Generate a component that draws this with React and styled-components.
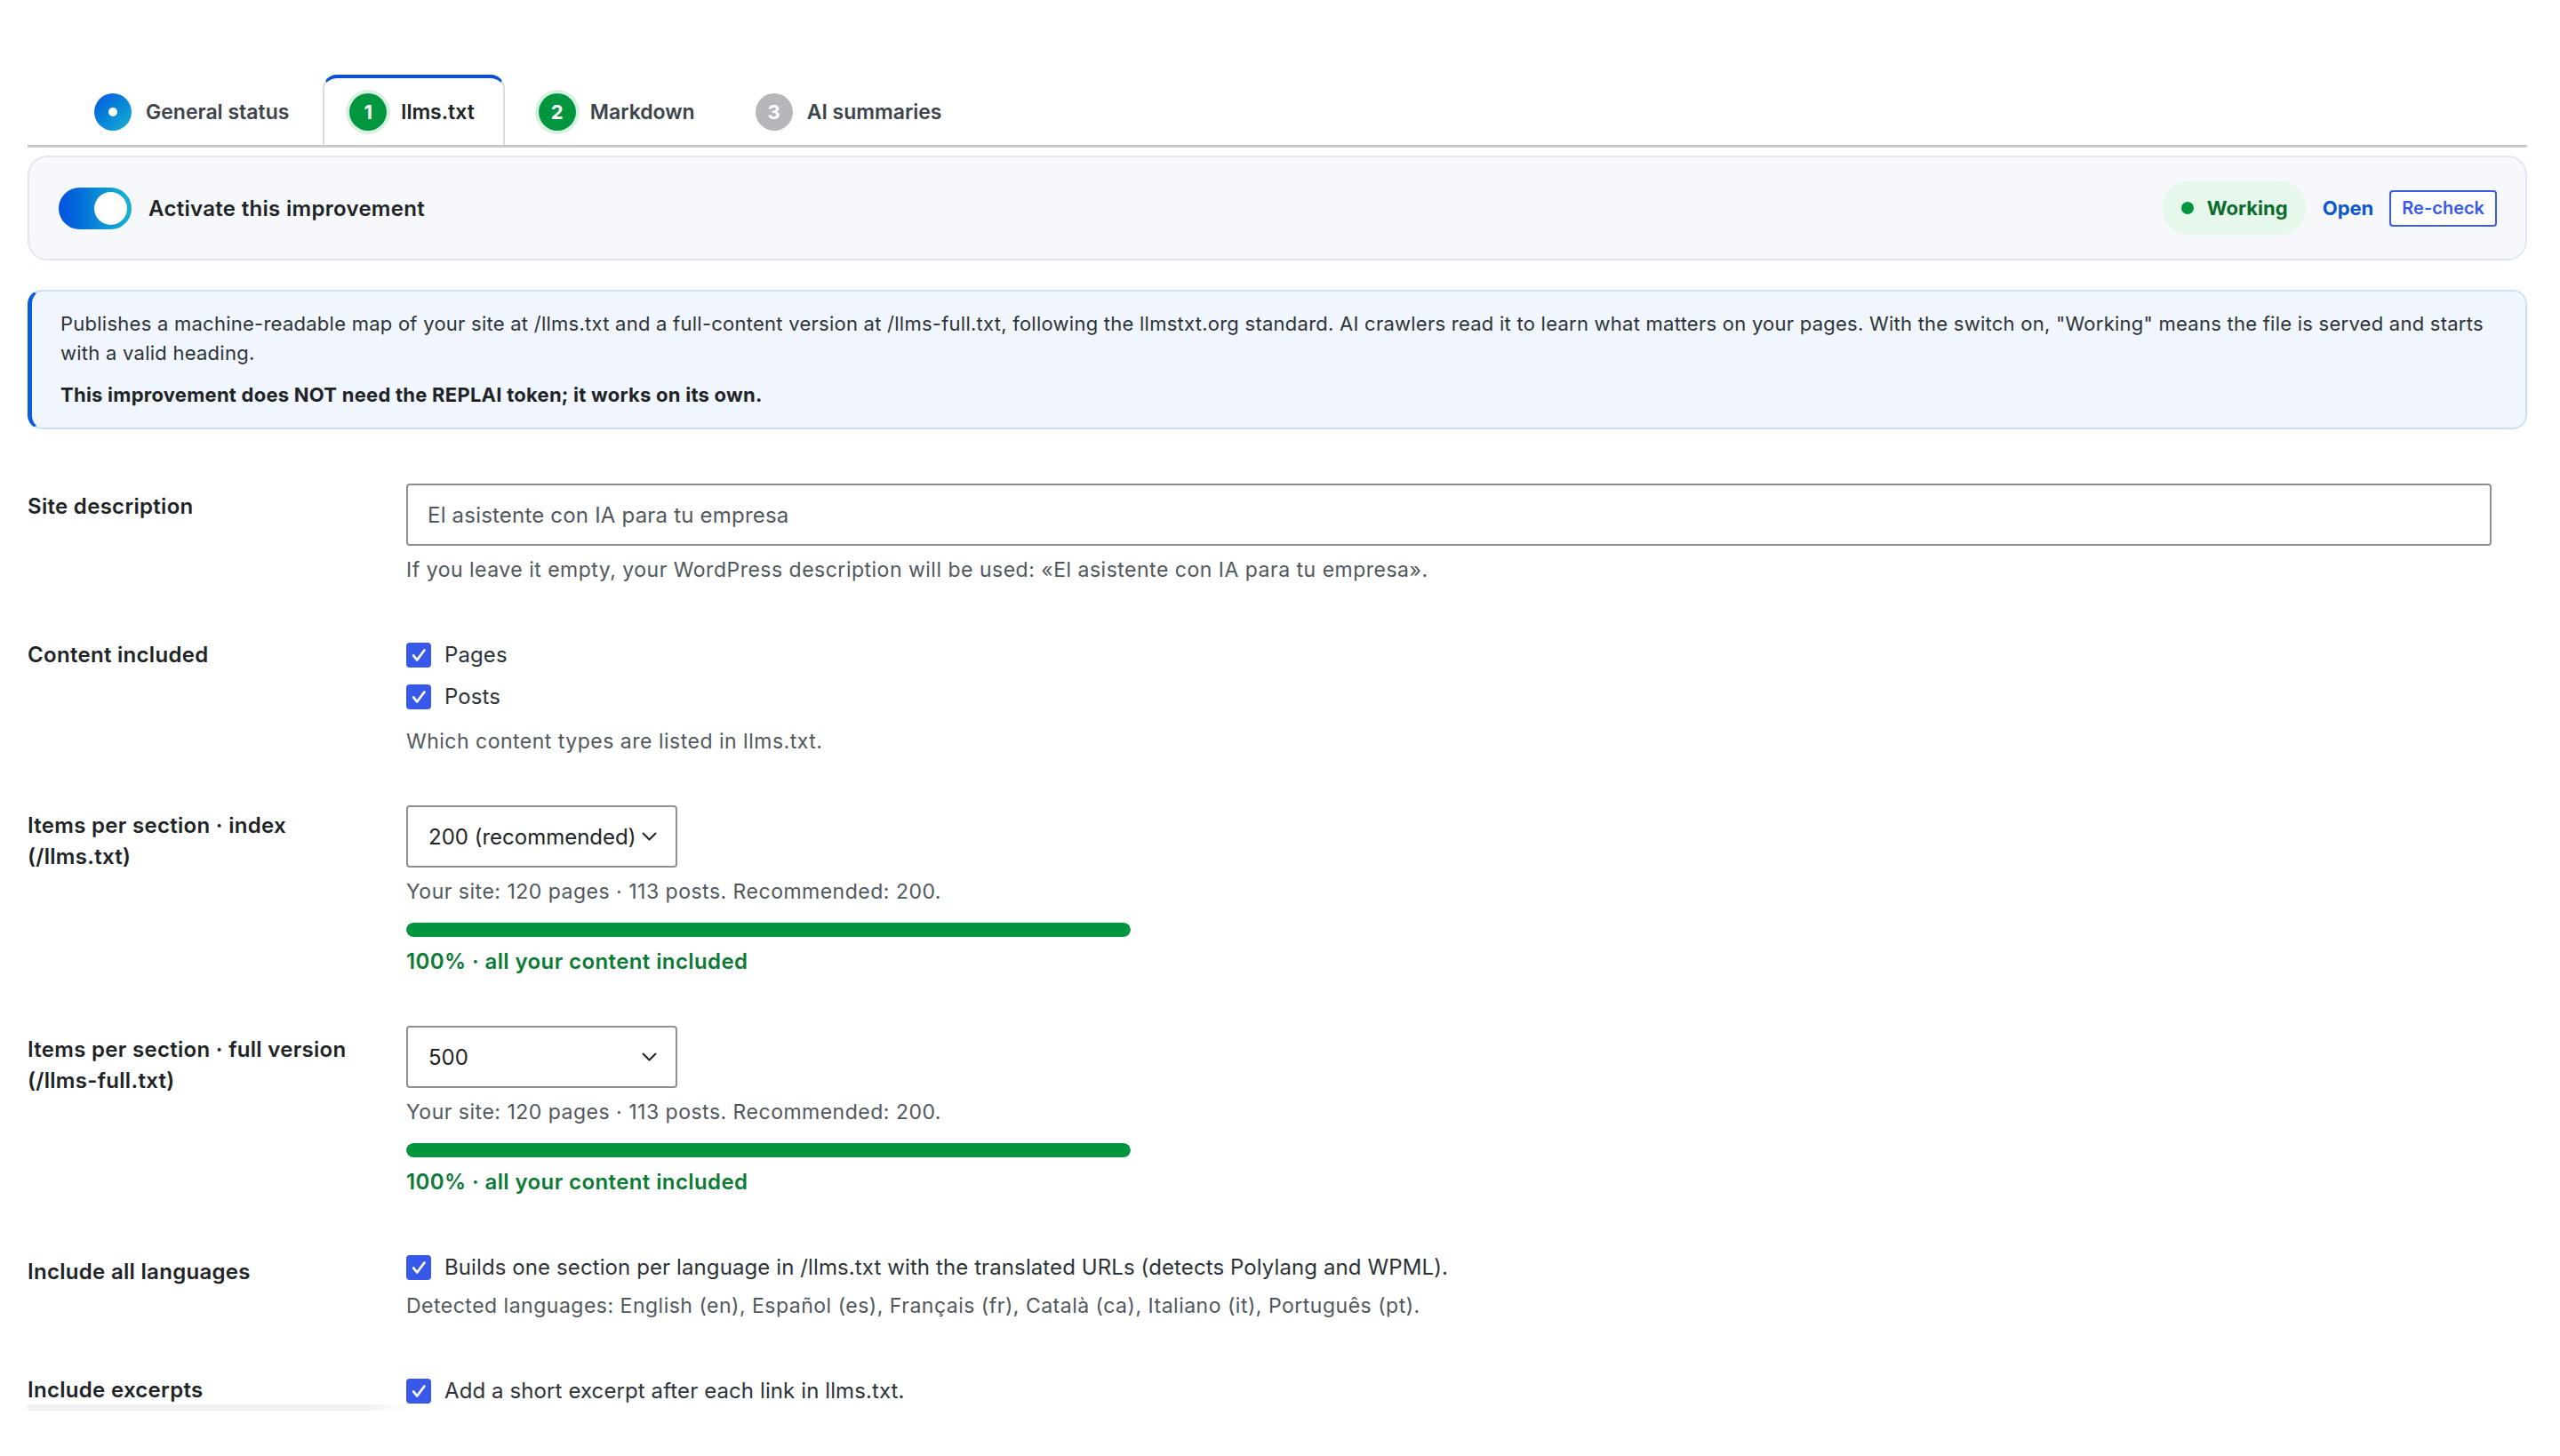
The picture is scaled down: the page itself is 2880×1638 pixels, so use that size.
import React from 'react';
import styled, { createGlobalStyle, css } from 'styled-components';

const GlobalStyle = createGlobalStyle`
    body{
        margin: 0;
        background: #ffffff;
        font-family: Inter, "Noto Sans", "Liberation Sans", sans-serif;
        color: #1d2327;
    }
`;

const Page = styled.div`
    padding: 84px 37px 0 31px;
`;

// tabs across the top
const TabBar = styled.div`
    display: flex;
    align-items: flex-end;
    gap: 8px;
    padding-left: 45px;
    border-bottom: 3px solid #c9cacd;
`;

const Tab = styled.div`
    display: flex;
    align-items: center;
    gap: 16px;
    box-sizing: border-box;
    height: 79px;
    padding: 0 ${props => props.active ? 32 : 28}px 0 28px;
    font-size: 23px;
    font-weight: 600;
    color: ${props => props.active ? '#1d2327' : '#3c434a'};
    border: 2px solid transparent;
    border-top: 4px solid transparent;
    border-bottom: none;
    border-radius: 16px 16px 0 0;
    ${props => props.active && css`
        background: #ffffff;
        border-color: #dcdcde;
        border-top-color: #0a4fd6;
    `}
`;

const Badge = styled.span`
    display: flex;
    align-items: center;
    justify-content: center;
    width: 42px;
    height: 42px;
    border-radius: 50%;
    font-size: 22px;
    font-weight: 700;
    color: #ffffff;
    background: ${props => props.kind === 'done' ? '#00963f' : props.kind === 'todo' ? '#b5b7ba' : 'linear-gradient(135deg, #0457e0 0%, #0a8ad8 55%, #1bb0d2 100%)'};
    ${props => props.kind === 'done' && 'box-shadow: 0 0 0 4px #d9f1e2;'}
`;

const Dot = styled.span`
    width: 10px;
    height: 10px;
    border-radius: 50%;
    background: #ffffff;
`;

// activate bar
const ActivateBar = styled.div`
    margin-top: 9px;
    display: flex;
    align-items: center;
    justify-content: space-between;
    box-sizing: border-box;
    height: 118px;
    padding: 0 32px 0 33px;
    background: #f6f8fc;
    border: 2px solid #e1e7f1;
    border-radius: 22px;
`;

const SwitchLabel = styled.label`
    display: flex;
    align-items: center;
    gap: 19px;
    font-size: 24px;
    font-weight: 600;
    letter-spacing: 0.3px;
    color: #1d2327;
`;

const Switch = styled.span`
    position: relative;
    width: 82px;
    height: 47px;
    border-radius: 24px;
    background: linear-gradient(90deg, #0050e0 0%, #0674d8 35%, #0a92d6 60%, #18b2d0 100%);
    &::after{
        content: '';
        position: absolute;
        top: 5px;
        right: 5px;
        width: 37px;
        height: 37px;
        border-radius: 50%;
        background: #ffffff;
    }
`;

const Actions = styled.div`
    display: flex;
    align-items: center;
    gap: 18px;
`;

const StatusPill = styled.span`
    display: flex;
    align-items: center;
    gap: 15px;
    height: 60px;
    padding: 0 20px 0 21px;
    border-radius: 30px;
    background: #e6f8ec;
    border: 1px solid #f2fbf5;
    font-size: 22px;
    font-weight: 700;
    color: #0b6b2f;
    &::before{
        content: '';
        width: 14px;
        height: 14px;
        border-radius: 50%;
        background: #00963f;
    }
`;

const TextLink = styled.a`
    font-size: 22px;
    font-weight: 700;
    color: #0b57d0;
    text-decoration: none;
`;

const OutlineButton = styled.button`
    height: 41px;
    padding: 0 12px;
    background: #ffffff;
    border: 2px solid #3b5be0;
    border-radius: 4px;
    font-family: inherit;
    font-size: 20px;
    font-weight: 600;
    color: #3858e9;
`;

// info notice
const Notice = styled.div`
    margin-top: 33px;
    padding: 20px 36px 20px 32px;
    background: #f1f6fe;
    border: 2px solid #cfe0f6;
    border-left: 5px solid #0a5ce0;
    border-radius: 16px;
    font-size: 22px;
    letter-spacing: 0.25px;
    line-height: 33px;
    color: #2c3338;
    p{
        margin: 0;
    }
    p + p{
        margin-top: 14px;
        font-weight: 700;
        color: #1d2327;
    }
`;

// settings form
const Form = styled.div`
    margin-top: 61px;
    display: flex;
    flex-direction: column;
    gap: 56px;
`;

const Row = styled.div`
    display: grid;
    grid-template-columns: 426px 1fr;
`;

const Label = styled.div`
    padding-top: ${props => props.offset || 7}px;
    font-size: 24px;
    font-weight: 600;
    letter-spacing: 0.3px;
    line-height: 35px;
    color: #1d2327;
`;

const Field = styled.div`
    display: flex;
    flex-direction: column;
    align-items: flex-start;
    padding-right: 40px;
`;

const TextInput = styled.input`
    box-sizing: border-box;
    width: 100%;
    height: 70px;
    padding: 0 22px;
    border: 2px solid #8c8f94;
    border-radius: 4px;
    font-family: inherit;
    font-size: 24px;
    letter-spacing: 0.2px;
    color: #50575e;
    background: #ffffff;
`;

const Help = styled.div`
    margin-top: ${props => props.tight ? 4 : 11}px;
    font-size: 23px;
    letter-spacing: 0.5px;
    line-height: 32px;
    color: #50575e;
`;

const CheckLine = styled.label`
    display: flex;
    align-items: center;
    gap: 15px;
    height: 47px;
    font-size: 24px;
    letter-spacing: 0.1px;
    color: #2c3338;
`;

const Box = styled.span`
    display: flex;
    align-items: center;
    justify-content: center;
    width: 28px;
    height: 28px;
    border-radius: 4px;
    background: #3858e9;
`;

const Select = styled.div`
    display: flex;
    align-items: center;
    justify-content: space-between;
    box-sizing: border-box;
    width: 305px;
    height: 70px;
    padding: 0 21px 0 23px;
    border: 2px solid #8c8f94;
    border-radius: 4px;
    font-size: 24px;
    color: #1d2327;
    background: #ffffff;
`;

const Track = styled.div`
    margin-top: 19px;
    width: 815px;
    height: 16px;
    border-radius: 8px;
    background: #e5e7ea;
    overflow: hidden;
`;

const Fill = styled.div`
    height: 100%;
    border-radius: 8px;
    background: #00963f;
`;

const Coverage = styled.div`
    margin-top: 12px;
    font-size: 24px;
    font-weight: 600;
    letter-spacing: 0.4px;
    line-height: 32px;
    color: #0a7a35;
`;

const Strip = styled.div`
    margin-top: -8px;
    width: 428px;
    height: 7px;
    background: linear-gradient(90deg, #f0f0f1 88%, #ffffff 100%);
`;

const Check = () => <Box>
    <svg width="22" height="22" viewBox="0 0 24 24" fill="none">
        <path d="M5.5 12.5l4.5 5.5L19 6" stroke="#ffffff" strokeWidth="3" strokeLinecap="round" strokeLinejoin="round"/>
    </svg>
</Box>

const Chevron = () => <svg width="17" height="10" viewBox="0 0 17 10" fill="none">
    <path d="M1.5 1.5l7 7 7-7" stroke="#1d2327" strokeWidth="2" strokeLinecap="round" strokeLinejoin="round"/>
</svg>

const tabs = [
    {label: 'General status', kind: 'status'},
    {label: 'llms.txt', kind: 'done', n: 1, active: true},
    {label: 'Markdown', kind: 'done', n: 2},
    {label: 'AI summaries', kind: 'todo', n: 3},
];

const siteLine = 'Your site: 120 pages · 113 posts. Recommended: 200.';

const Limit = ({value, pct}) => <Field>
    <Select>{value}<Chevron/></Select>
    <Help>{siteLine}</Help>
    <Track><Fill style={{width: pct + '%'}}/></Track>
    <Coverage>{pct}% · all your content included</Coverage>
</Field>

const App = () => {
    return <Page>
        <GlobalStyle/>
        <TabBar>
            {tabs.map(t => <Tab key={t.label} active={t.active}>
                <Badge kind={t.kind}>{t.kind === 'status' ? <Dot/> : t.n}</Badge>
                {t.label}
            </Tab>)}
        </TabBar>

        <ActivateBar>
            <SwitchLabel><Switch/>Activate this improvement</SwitchLabel>
            <Actions>
                <StatusPill>Working</StatusPill>
                <TextLink href="#">Open</TextLink>
                <OutlineButton>Re-check</OutlineButton>
            </Actions>
        </ActivateBar>

        <Notice>
            <p>Publishes a machine-readable map of your site at /llms.txt and a full-content version at /llms-full.txt, following the llmstxt.org standard. AI crawlers read it to learn what matters on your pages. With the switch on, "Working" means the file is served and starts with a valid heading.</p>
            <p>This improvement does NOT need the REPLAI token; it works on its own.</p>
        </Notice>

        <Form>
            <Row>
                <Label offset={8}>Site description</Label>
                <Field>
                    <TextInput readOnly value="El asistente con IA para tu empresa"/>
                    <Help>If you leave it empty, your WordPress description will be used: «El asistente con IA para tu empresa».</Help>
                </Field>
            </Row>
            <Row>
                <Label offset={6}>Content included</Label>
                <Field>
                    <CheckLine><Check/>Pages</CheckLine>
                    <CheckLine><Check/>Posts</CheckLine>
                    <Help>Which content types are listed in llms.txt.</Help>
                </Field>
            </Row>
            <Row>
                <Label offset={5}>Items per section · index<br/>(/llms.txt)</Label>
                <Limit value="200 (recommended)" pct={100}/>
            </Row>
            <Row>
                <Label offset={9}>Items per section · full version<br/>(/llms-full.txt)</Label>
                <Limit value="500" pct={100}/>
            </Row>
            <Row>
                <Label offset={11}>Include all languages</Label>
                <Field>
                    <CheckLine><Check/>Builds one section per language in /llms.txt with the translated URLs (detects Polylang and WPML).</CheckLine>
                    <Help tight>Detected languages: English (en), Español (es), Français (fr), Català (ca), Italiano (it), Português (pt).</Help>
                </Field>
            </Row>
            <Row>
                <Label offset={5}>Include excerpts</Label>
                <Field>
                    <CheckLine><Check/>Add a short excerpt after each link in llms.txt.</CheckLine>
                </Field>
            </Row>
        </Form>
        <Strip/>
    </Page>
}

export default App;
